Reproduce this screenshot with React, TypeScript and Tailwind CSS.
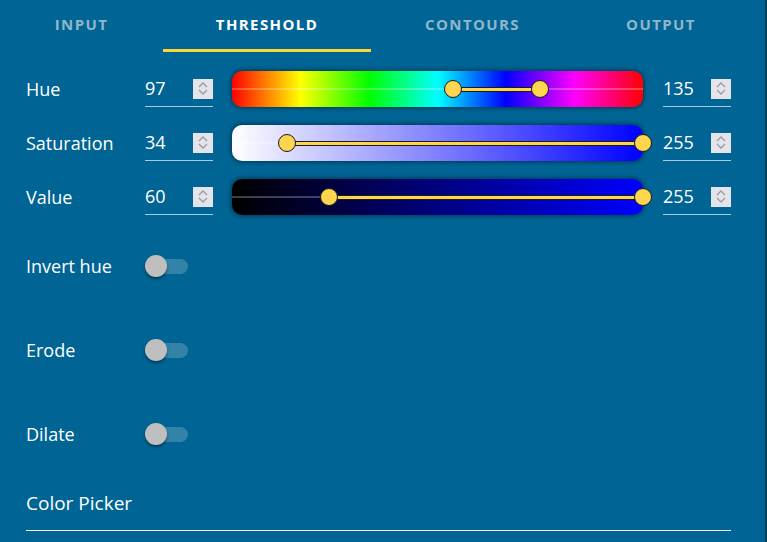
import React from "react";

const tabs = ["Input", "Threshold", "Contours", "Output"];
const tabWidths = ["w-[163px]", "w-[208px]", "w-[203px]", "w-[174px]"];

const Spinner: React.FC = () => (
  <div className="w-5 h-5 bg-[#e4e4ea] flex flex-col items-center justify-center gap-[1px]">
    <svg width="10" height="6" viewBox="0 0 10 6" fill="none" stroke="#9a9aa2" strokeWidth="1.3">
      <path d="M1 5 L5 1 L9 5" />
    </svg>
    <svg width="10" height="6" viewBox="0 0 10 6" fill="none" stroke="#9a9aa2" strokeWidth="1.3">
      <path d="M1 1 L5 5 L9 1" />
    </svg>
  </div>
);

const NumberField: React.FC<{ value: number }> = ({ value }) => (
  <div className="w-[68px] h-9 flex items-center justify-between border-b border-[#a9cde0]">
    <span className="text-[18px] text-white">{value}</span>
    <Spinner />
  </div>
);

const RangeSlider: React.FC<{ gradient: string; lo: number; hi: number; max: number }> = ({
  gradient,
  lo,
  hi,
  max,
}) => {
  const a = (lo / max) * 100;
  const b = (hi / max) * 100;
  return (
    <div className={`relative w-[411px] h-9 rounded-[10px] shadow-[0_0_4px_1px_rgba(0,0,0,0.45)] ${gradient}`}>
      <div className="absolute left-0 right-0 top-[17px] h-[2px] bg-white/25" />
      <div
        className="absolute top-[16px] h-[5px] bg-[#fdd54f] border-y border-[#1b1b1b]"
        style={{ left: `${a}%`, width: `${b - a}%` }}
      />
      {[a, b].map((p, i) => (
        <div
          key={i}
          className="absolute top-[9px] -ml-[9px] w-[18px] h-[18px] rounded-full bg-[#fdd54f] border border-[#1b1b1b]"
          style={{ left: `${p}%` }}
        />
      ))}
    </div>
  );
};

const Toggle: React.FC<{ label: string }> = ({ label }) => (
  <div className="flex items-center h-10">
    <span className="w-[119px] text-[18px] text-white">{label}</span>
    <div className="relative w-[43px] h-[22px] flex items-center">
      <div className="ml-[3px] w-[40px] h-[15px] rounded-full bg-white/20" />
      <div className="absolute left-0 top-0 w-[22px] h-[22px] rounded-full bg-[#bfbfbf] shadow-[0_2px_3px_rgba(0,0,0,0.4)]" />
    </div>
  </div>
);

const rows = [
  { label: "Hue", lo: 97, hi: 135, max: 180, gradient: "bg-[linear-gradient(to_right,#ff0000,#ffff00,#00ff00,#00ffff,#0000ff,#ff00ff,#ff0000)]" },
  { label: "Saturation", lo: 34, hi: 255, max: 255, gradient: "bg-[linear-gradient(to_right,#ffffff,#0000ff)]" },
  { label: "Value", lo: 60, hi: 255, max: 255, gradient: "bg-[linear-gradient(to_right,#000000,#0000ff)]" },
];

export default function App() {
  return (
    <div className="w-[767px] h-[542px] overflow-hidden bg-[#006494] flex" style={{ fontFamily: "'Open Sans', sans-serif" }}>
      <div className="w-[765px]">
        <nav className="flex h-[52px]">
          {tabs.map((t, i) => (
            <div key={t} className={`${tabWidths[i]} flex flex-col items-center`}>
              <span
                className={`flex-1 flex items-center text-[15px] font-bold uppercase tracking-[1.4px] ${
                  i === 1 ? "text-white" : "text-[#8fb7cc]"
                }`}
              >
                {t}
              </span>
              <div className={`h-[3px] w-full ${i === 1 ? "bg-[#fdd835]" : ""}`} />
            </div>
          ))}
        </nav>

        <div className="px-[26px] pt-[19px] flex flex-col gap-[18px]">
          {rows.map((r) => (
            <div key={r.label} className="flex items-center">
              <span className="w-[119px] text-[18px] text-white">{r.label}</span>
              <NumberField value={r.lo} />
              <div className="ml-[19px] mr-[20px]">
                <RangeSlider gradient={r.gradient} lo={r.lo} hi={r.hi} max={r.max} />
              </div>
              <NumberField value={r.hi} />
            </div>
          ))}
        </div>

        <div className="px-[26px] mt-[31px] flex flex-col gap-[44px]">
          <Toggle label="Invert hue" />
          <Toggle label="Erode" />
          <Toggle label="Dilate" />
        </div>

        <div className="ml-[26px] w-[705px] mt-[35px] h-[42px] flex items-start border-b border-white">
          <span className="text-[19px] text-white">Color Picker</span>
        </div>
      </div>
      <div className="w-[2px] bg-[#003d5c]" />
    </div>
  );
}
